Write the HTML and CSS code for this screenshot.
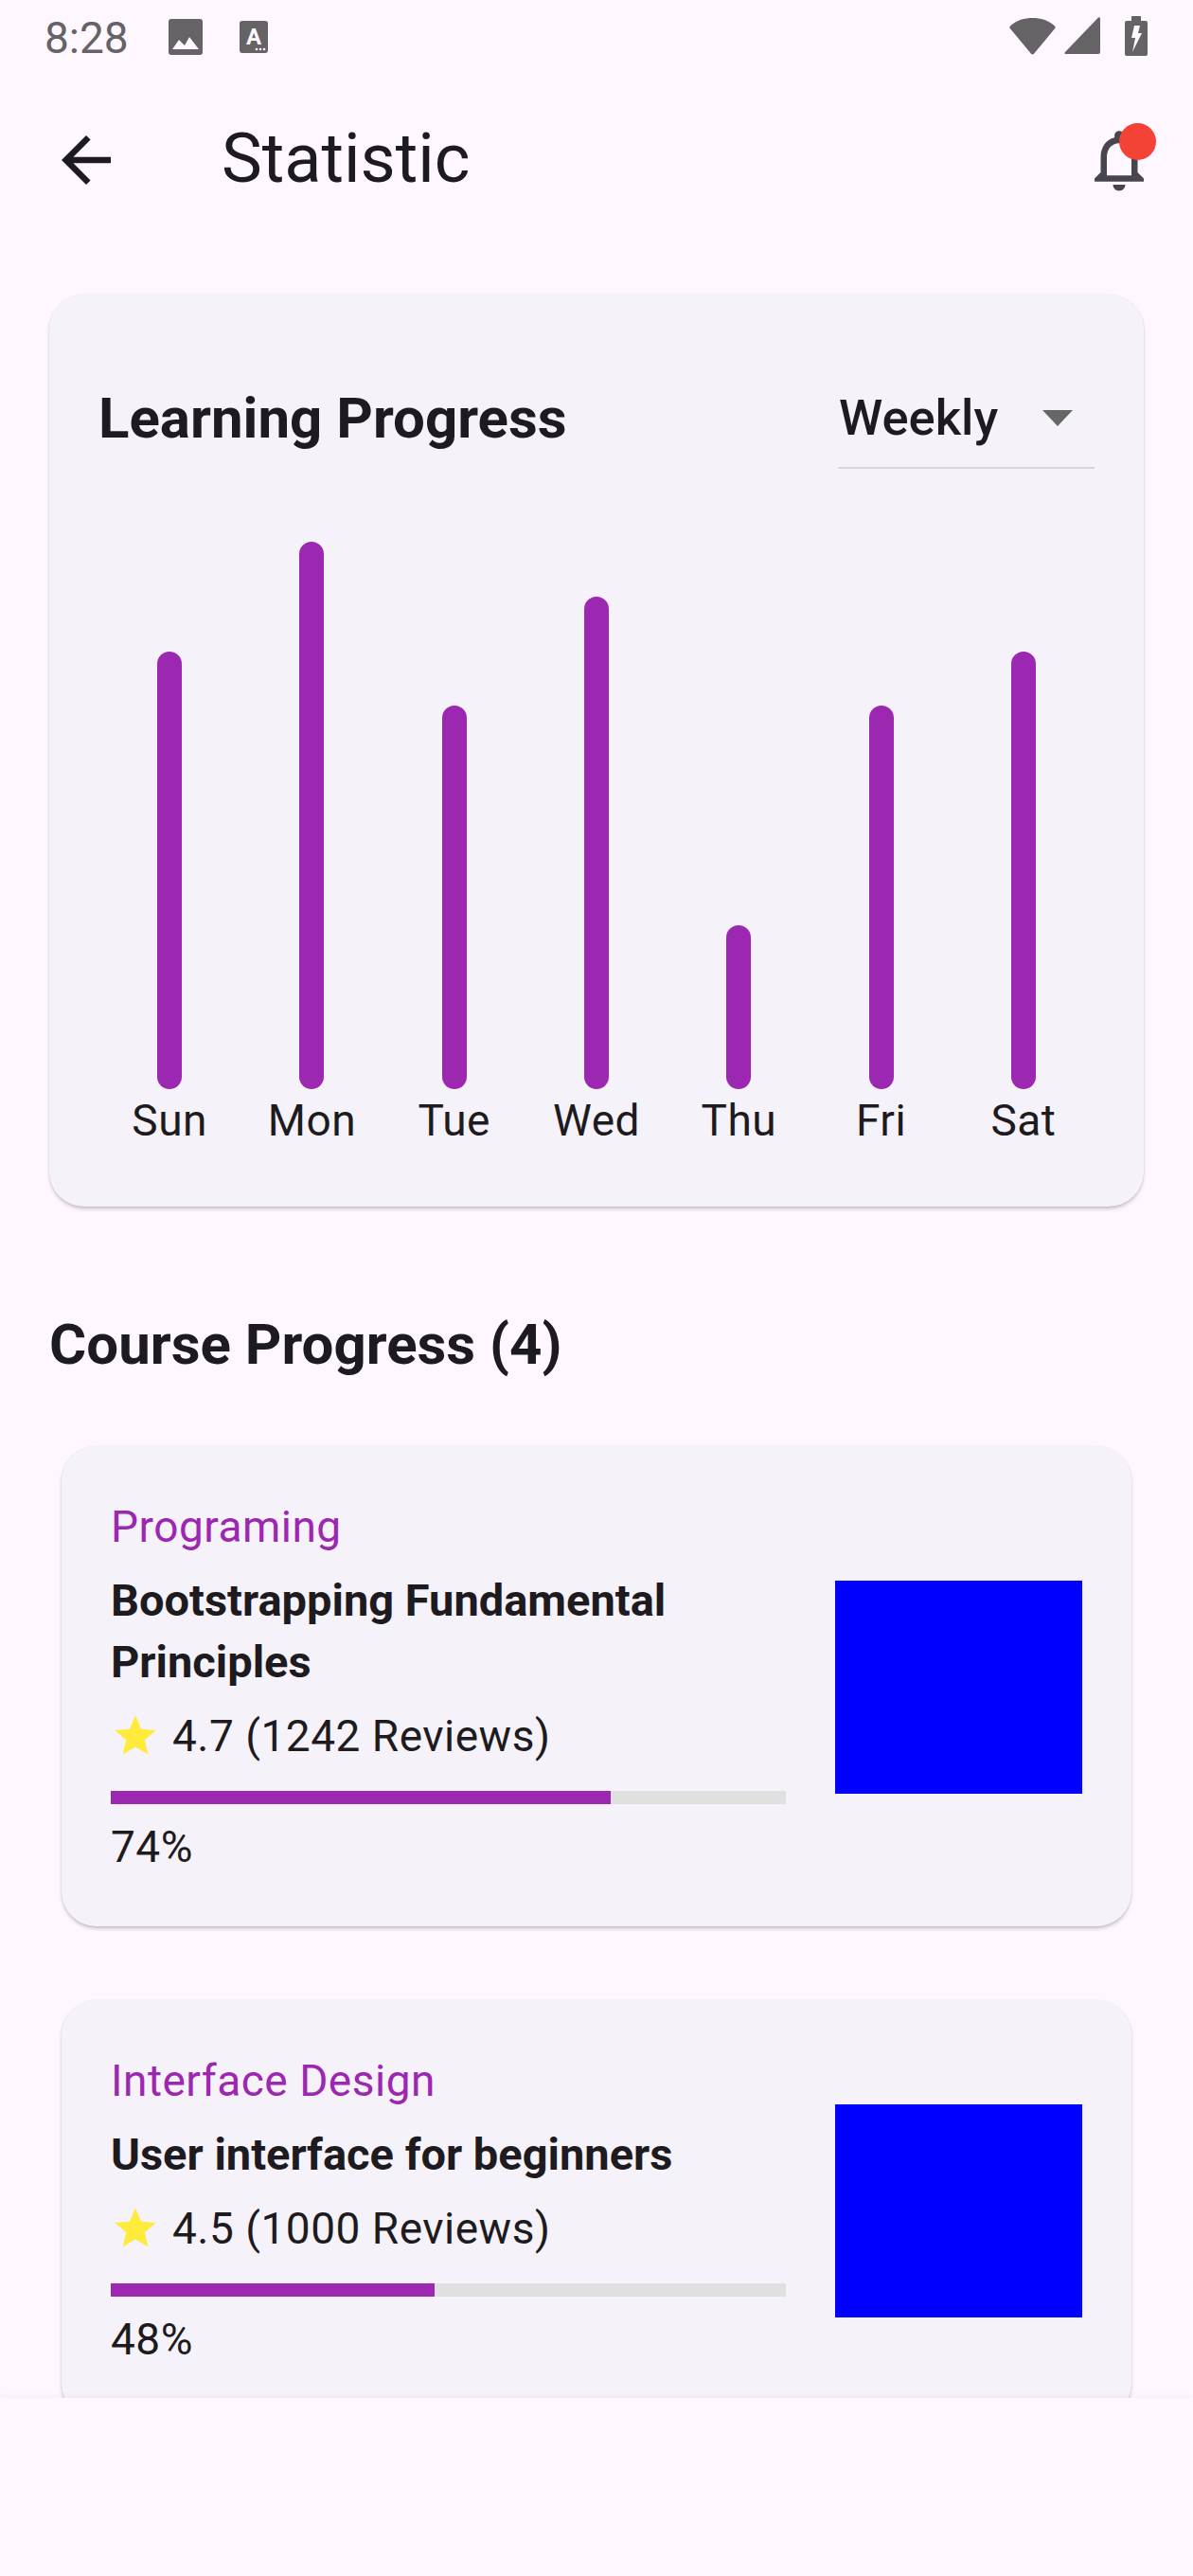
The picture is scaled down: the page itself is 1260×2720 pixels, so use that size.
FILE: index.html
```html
<!DOCTYPE html>
<html lang="en">
<head>
    <meta charset="UTF-8">
    <meta name="viewport" content="width=device-width, initial-scale=1.0">
    <title>Statistic</title>
    <link rel="stylesheet" href="styles.css">
</head>
<body>
    <div class="screen">
        <!-- status bar -->
        <div class="status-bar">
            <div class="status-left">
                <span class="time">8:28</span>
                <svg class="icon-image" width="36" height="38" viewBox="0 0 36 38">
                    <rect width="36" height="38" rx="3" fill="#666366"/>
                    <polygon points="4,32 11,22 17,28 22,19 32,32" fill="#fef7ff"/>
                </svg>
                <svg class="icon-keyboard" width="30" height="34" viewBox="0 0 30 34">
                    <rect width="30" height="34" rx="3" fill="#666366"/>
                    <text x="15" y="25" text-anchor="middle" class="icon-letter">A</text>
                    <circle cx="18" cy="30" r="1.3" fill="#fef7ff"/>
                    <circle cx="22" cy="30" r="1.3" fill="#fef7ff"/>
                    <circle cx="26" cy="30" r="1.3" fill="#fef7ff"/>
                </svg>
            </div>
            <div class="status-right">
                <svg width="49" height="40" viewBox="0 0 49 40">
                    <path d="M1 9.5C8 3 16 1 24.5 1S41 3 48 9.5c.8.8.8 1.6.2 2.4L26 38.8c-.8 1-2.2 1-3 0L.8 11.9c-.6-.8-.6-1.6.2-2.4z" fill="#666366"/>
                </svg>
                <svg width="38" height="39" viewBox="0 0 38 39">
                    <path d="M36 .6c1-.8 2 0 2 1V37a2 2 0 0 1-2 2H1.5c-1 0-1.5-1-.8-1.8z" fill="#666366"/>
                </svg>
                <svg class="icon-battery" width="24" height="42" viewBox="0 0 24 42">
                    <rect x="7" y="0" width="10" height="6" fill="#666366"/>
                    <rect x="0" y="5" width="24" height="37" rx="2" fill="#666366"/>
                    <polygon points="10,10 16,10 14,18 18,18 8,38 11,23 7,23" fill="#fef7ff"/>
                </svg>
            </div>
        </div>

        <!-- app bar -->
        <div class="app-bar">
            <svg class="back" width="78" height="78" viewBox="0 0 24 24">
                <path d="M20 11H7.83l5.59-5.59L12 4l-8 8 8 8 1.41-1.41L7.83 13H20v-2z" fill="#1d1b20"/>
            </svg>
            <h1 class="app-title">Statistic</h1>
            <div class="bell">
                <svg width="78" height="78" viewBox="0 0 24 24">
                    <path d="M12 22c1.1 0 2-.9 2-2h-4c0 1.1.89 2 2 2zm6-6v-5c0-3.07-1.64-5.64-4.5-6.32V4c0-.83-.67-1.5-1.5-1.5s-1.5.67-1.5 1.5v.68C7.63 5.36 6 7.92 6 11v5l-2 2v1h16v-1l-2-2zm-2 1H8v-6c0-2.48 1.51-4.5 4-4.5s4 2.02 4 4.5v6z" fill="#49454f"/>
                </svg>
                <span class="bell-dot"></span>
            </div>
        </div>

        <div class="content">
            <!-- weekly chart -->
            <div class="card chart-card">
                <div class="chart-header">
                    <h2 class="heading">Learning Progress</h2>
                    <div class="dropdown">
                        <span class="dropdown-value">Weekly</span>
                        <svg width="32" height="17" viewBox="0 0 32 17">
                            <polygon points="0,0 32,0 16,17" fill="#666666"/>
                        </svg>
                    </div>
                </div>
                <div class="chart">
                    <div class="chart-col"><div class="bar-area"><div class="bar" style="height: 80%"></div></div><span class="day">Sun</span></div>
                    <div class="chart-col"><div class="bar-area"><div class="bar" style="height: 100%"></div></div><span class="day">Mon</span></div>
                    <div class="chart-col"><div class="bar-area"><div class="bar" style="height: 70%"></div></div><span class="day">Tue</span></div>
                    <div class="chart-col"><div class="bar-area"><div class="bar" style="height: 90%"></div></div><span class="day">Wed</span></div>
                    <div class="chart-col"><div class="bar-area"><div class="bar" style="height: 30%"></div></div><span class="day">Thu</span></div>
                    <div class="chart-col"><div class="bar-area"><div class="bar" style="height: 70%"></div></div><span class="day">Fri</span></div>
                    <div class="chart-col"><div class="bar-area"><div class="bar" style="height: 80%"></div></div><span class="day">Sat</span></div>
                </div>
            </div>

            <h2 class="heading section-title">Course Progress (4)</h2>

            <!-- courses -->
            <div class="course-list">
                <div class="card course">
                    <div class="course-info">
                        <p class="course-cat">Programing</p>
                        <p class="course-name">Bootstrapping Fundamental Principles</p>
                        <div class="rating">
                            <svg width="52" height="52" viewBox="0 0 24 24">
                                <path d="M12 17.27L18.18 21l-1.64-7.03L22 9.24l-7.19-.61L12 2 9.19 8.63 2 9.24l5.46 4.73L5.82 21z" fill="#ffeb3b"/>
                            </svg>
                            <span>4.7 (1242 Reviews)</span>
                        </div>
                        <div class="track"><div class="fill" style="width: 74%"></div></div>
                        <p class="percent">74%</p>
                    </div>
                    <div class="thumb"></div>
                </div>

                <div class="card course">
                    <div class="course-info">
                        <p class="course-cat">Interface Design</p>
                        <p class="course-name">User interface for beginners</p>
                        <div class="rating">
                            <svg width="52" height="52" viewBox="0 0 24 24">
                                <path d="M12 17.27L18.18 21l-1.64-7.03L22 9.24l-7.19-.61L12 2 9.19 8.63 2 9.24l5.46 4.73L5.82 21z" fill="#ffeb3b"/>
                            </svg>
                            <span>4.5 (1000 Reviews)</span>
                        </div>
                        <div class="track"><div class="fill" style="width: 48%"></div></div>
                        <p class="percent">48%</p>
                    </div>
                    <div class="thumb"></div>
                </div>
            </div>
        </div>

        <div class="bottom-bar"></div>
    </div>
</body>
</html>
```

FILE: styles.css
```css
* {
    box-sizing: border-box;
}
body {
    margin: 0;
    background-color: #fef7ff;
    color: #1d1b20;
    font-family: Roboto, "Noto Sans", sans-serif;
}
h1, h2, p {
    margin: 0;
    font-weight: 400;
}
.screen {
    width: 1260px;
    height: 2720px;
    display: flex;
    flex-direction: column;
    overflow: hidden;
}

/* status bar */
.status-bar {
    height: 78px;
    flex: none;
    display: flex;
    justify-content: space-between;
    align-items: flex-start;
    padding: 17px 48px 0 47px;
}
.status-left {
    display: flex;
    align-items: flex-start;
}
.status-right {
    display: flex;
    align-items: flex-start;
    gap: 9px;
}
.time {
    font-size: 46px;
    line-height: 46px;
    color: #666366;
}
.icon-image {
    margin: 3px 0 0 42px;
}
.icon-keyboard {
    margin: 5px 0 0 39px;
}
.icon-letter {
    font-size: 24px;
    font-weight: 700;
    fill: #fef7ff;
}
.status-right svg {
    margin-top: 1px;
}
.status-right .icon-battery {
    margin: 0 0 0 17px;
}

/* app bar */
.app-bar {
    height: 182px;
    flex: none;
    display: flex;
    align-items: center;
    padding: 0 39px 0 52px;
}
.back {
    flex: none;
}
.app-title {
    flex: 1;
    margin-left: 104px;
    padding-bottom: 3px;
    font-size: 72px;
    line-height: 84px;
}
.bell {
    position: relative;
    width: 78px;
    height: 78px;
}
.bell svg {
    display: block;
}
.bell-dot {
    position: absolute;
    top: 0;
    right: 0;
    width: 39px;
    height: 39px;
    border-radius: 50%;
    background-color: #f44336;
}

/* cards */
.content {
    flex: 1;
    min-height: 0;
    padding-top: 51px;
}
.card {
    background-color: #f6f2fa;
    border-radius: 37px;
    box-shadow: 0 3px 4px -1px rgba(0, 0, 0, 0.26), 0 0 2px rgba(0, 0, 0, 0.08);
}
.chart-card {
    margin: 0 52px;
    padding: 78px 52px 67px;
}
.chart-header {
    height: 106px;
    display: flex;
    justify-content: space-between;
    align-items: center;
}
.heading {
    font-size: 60px;
    line-height: 70px;
    font-weight: 700;
}
.dropdown {
    width: 271px;
    height: 106px;
    display: flex;
    justify-content: space-between;
    align-items: center;
    padding: 0 23px 0 1px;
    border-bottom: 2px solid #d9d5dc;
}
.dropdown-value {
    font-size: 52.5px;
    font-weight: 500;
}
.chart {
    display: grid;
    grid-template-columns: repeat(7, 1fr);
    margin-top: 77px;
}
.chart-col {
    display: flex;
    flex-direction: column;
    align-items: center;
}
.bar-area {
    height: 578px;
    display: flex;
    align-items: flex-end;
}
.bar {
    width: 26px;
    border-radius: 13px;
    background-color: #9c27b0;
}
.day {
    margin-top: 9px;
    font-size: 46px;
    line-height: 48px;
    letter-spacing: 0.5px;
}

/* course list */
.section-title {
    margin: 111px 0 72px 52px;
}
.course-list {
    display: flex;
    flex-direction: column;
    gap: 78px;
    margin: 0 65px;
}
.course {
    display: flex;
    align-items: center;
    gap: 52px;
    padding: 54px 52px 52px;
}
.course-info {
    flex: 1;
    min-width: 0;
}
.course-cat {
    font-size: 46px;
    line-height: 63px;
    letter-spacing: 0.5px;
    color: #9c27b0;
}
.course-name {
    margin-top: 13px;
    font-size: 47px;
    line-height: 65px;
    font-weight: 700;
}
.rating {
    display: flex;
    align-items: center;
    gap: 13px;
    height: 63px;
    margin-top: 14px;
    font-size: 46px;
    letter-spacing: 0.5px;
}
.track {
    height: 14px;
    margin-top: 27px;
    background-color: #e0e0e0;
}
.fill {
    height: 100%;
    background-color: #9c27b0;
}
.percent {
    margin-top: 14px;
    font-size: 46px;
    line-height: 63px;
    letter-spacing: 0.5px;
}
.thumb {
    flex: none;
    width: 261px;
    height: 225px;
    background-color: #0000ff;
}

.bottom-bar {
    height: 188px;
    flex: none;
    position: relative;
    background-color: #fef7ff;
    box-shadow: 0 -2px 6px rgba(0, 0, 0, 0.04);
}
```
